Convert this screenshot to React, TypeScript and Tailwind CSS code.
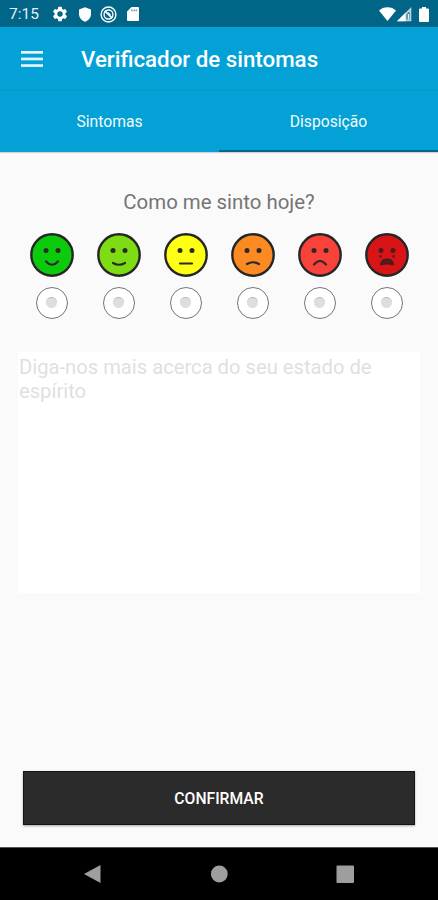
import { useState } from 'react';

interface Mood {
  id: string;
  fill: string;
  mouth: string;
  crying?: boolean;
}

const moods: Mood[] = [
  { id: 'great', fill: '#0ccb0c', mouth: 'M16 28.5 Q22 35 28 28.5' },
  { id: 'good', fill: '#7ddd12', mouth: 'M16 30 Q22 33.5 28 30' },
  { id: 'neutral', fill: '#ffff14', mouth: 'M16 30.5 H28' },
  { id: 'bad', fill: '#fb8a22', mouth: 'M16 31 Q22 27.5 28 31' },
  { id: 'sad', fill: '#f9423a', mouth: 'M16 31.5 Q22 24.5 28 31.5' },
  { id: 'awful', fill: '#d81416', mouth: 'M16 31.3 C17 25 27 25 28 31.3 Q22 29.5 16 31.3 Z', crying: true },
];

function Face({ mood }: { mood: Mood }) {
  const ink = mood.crying ? '#4a1c1c' : '#2b2b2b';

  return (
    <svg viewBox="0 0 44 44" className="w-11 h-11 block">
      <circle cx="22" cy="22" r="20.7" fill={mood.fill} stroke="#262626" strokeWidth="2.4" />
      <circle cx="16" cy="17.5" r="2.5" fill={ink} />
      <circle cx="28" cy="17.5" r="2.5" fill={ink} />
      <path
        d={mood.mouth}
        fill={mood.crying ? '#6b1a1a' : 'none'}
        stroke={ink}
        strokeWidth="2.2"
        strokeLinecap="round"
        strokeLinejoin="round"
      />
      {mood.crying && (
        <g fill="#6b1a1a">
          <circle cx="15.5" cy="23.5" r="1.4" />
          <circle cx="28.5" cy="23.5" r="1.4" />
        </g>
      )}
    </svg>
  );
}

function StatusBar() {
  return (
    <div className="h-[27px] bg-[#006587] flex items-center justify-between px-[9px] text-white">
      <div className="flex items-center">
        <span className="w-[42px] text-[15.5px] leading-none pt-[3px] text-[#e3f1f6]">7:15</span>
        <svg viewBox="0 0 24 24" className="w-[18px] h-[18px]" fill="currentColor">
          <path d="M19.14 12.94c.04-.3.06-.61.06-.94s-.02-.64-.07-.94l2.03-1.58a.49.49 0 0 0 .12-.61l-1.92-3.32a.49.49 0 0 0-.59-.22l-2.39.96a7 7 0 0 0-1.62-.94l-.36-2.54a.48.48 0 0 0-.48-.41h-3.84a.47.47 0 0 0-.47.41l-.36 2.54c-.59.24-1.13.57-1.62.94l-2.39-.96a.48.48 0 0 0-.59.22L2.74 8.87a.48.48 0 0 0 .12.61l2.03 1.58a6 6 0 0 0 0 1.88l-2.03 1.58a.49.49 0 0 0-.12.61l1.92 3.32c.12.22.37.29.59.22l2.39-.96c.5.38 1.03.7 1.62.94l.36 2.54c.05.24.24.41.48.41h3.84c.24 0 .44-.17.47-.41l.36-2.54a7 7 0 0 0 1.62-.94l2.39.96c.22.08.47 0 .59-.22l1.92-3.32a.47.47 0 0 0-.12-.61zM12 15.6A3.6 3.6 0 1 1 12 8.4a3.6 3.6 0 0 1 0 7.2z" />
        </svg>
        <svg viewBox="0 0 14 15" className="w-[14px] h-[15px] ml-[8.5px] mt-px" fill="currentColor">
          <path d="M7 .2 13 2.6V7c0 3.5-2.5 6.5-6 7.7C3.5 13.5 1 10.5 1 7V2.6z" />
        </svg>
        <svg viewBox="0 0 16 16" className="w-[17px] h-[17px] ml-[8.5px] mt-px" fill="none" stroke="currentColor">
          <circle cx="8" cy="8" r="7" strokeWidth="1.3" />
          <circle cx="8" cy="8" r="4.2" strokeWidth="1.3" />
          <path d="M4.6 4.6l6.8 6.8" strokeWidth="1.6" />
          <path d="M7.6 6.2l2.2 2.2" strokeWidth="1.2" />
        </svg>
        <svg viewBox="0 0 12 14" className="w-[12px] h-[14px] ml-[10px] mt-px" fill="currentColor">
          <path
            fillRule="evenodd"
            d="M4.5 0H11a1 1 0 0 1 1 1v12a1 1 0 0 1-1 1H1a1 1 0 0 1-1-1V4.5zM4.5 2.5v1.8h.9V2.5zM6.6 2.5v1.8h.9V2.5zM8.7 2.5v1.8h.9V2.5z"
          />
        </svg>
      </div>
      <div className="flex items-center">
        <svg viewBox="0 0 17 14" className="w-[17px] h-[14px]" fill="currentColor">
          <path d="M8.5 14 0 3.600C2.200 1.400 5.200.200 8.500.200s6.300 1.200 8.500 3.400z" />
        </svg>
        <svg viewBox="0 0 15 15" className="w-[15px] h-[15px] ml-px mt-px">
          <path d="M14.3 0v14.3H0z" fill="#b9d5df" />
          <path d="M8.5 5.8v8.500H0z" fill="#fff" />
          <path d="M12.500 4.500v8h-3V7.500z" fill="#1a6f8d" />
          <path d="M11.300 7v5.500" stroke="#fff" strokeWidth="1.200" />
        </svg>
        <svg viewBox="0 0 10 15" className="w-[10px] h-[15px] ml-[7px] mt-px" fill="currentColor">
          <path d="M3 0h4v1.5h2a1 1 0 0 1 1 1V14a1 1 0 0 1-1 1H1a1 1 0 0 1-1-1V2.5a1 1 0 0 1 1-1h2z" />
        </svg>
      </div>
    </div>
  );
}

function AppBar() {
  return (
    <header className="h-16 bg-[#03a1d6] border-b border-[#0399cb] flex items-center pl-[21px]">
      <button aria-label="Menu">
        <svg viewBox="0 0 22 16" className="w-[22px] h-4 block" fill="#dff4fb">
          <rect y="0" width="22" height="2.7" />
          <rect y="6.6" width="22" height="2.7" />
          <rect y="13.2" width="22" height="2.7" />
        </svg>
      </button>
      <h1 className="ml-[38px] pt-[3px] text-[22.3px] font-medium text-white whitespace-nowrap">Verificador de sintomas</h1>
    </header>
  );
}

function NavBar() {
  return (
    <nav className="h-[53px] bg-black border-t border-[#555]">
      <svg viewBox="0 0 438 52" className="w-full h-[52px]" fill="#9e9e9e">
        <path d="M84 26 100.5 17v18z" />
        <circle cx="219.3" cy="26" r="8.4" />
        <rect x="336.5" y="17.5" width="17.5" height="17.5" rx="1" />
      </svg>
    </nav>
  );
}

export default function App() {
  const [tab, setTab] = useState('Disposição');
  const [selected, setSelected] = useState('');

  return (
    <div className="w-[438px] h-[900px] flex flex-col bg-[#fafafa] overflow-hidden font-[Roboto,sans-serif]">
      <StatusBar />
      <AppBar />

      <div className="h-[61px] shrink-0 bg-[#03a1d6] grid grid-cols-2 shadow-[0_1px_1px_rgba(0,0,0,0.15)]">
        {['Sintomas', 'Disposição'].map((name) => (
          <button
            key={name}
            onClick={() => setTab(name)}
            className={`pt-[2px] text-[15.7px] text-[#f2fafd] border-b-2 ${tab === name ? 'border-[#05658a]' : 'border-transparent'}`}
          >
            {name}
          </button>
        ))}
      </div>

      <main className="flex-1 flex flex-col">
        <h2 className="mt-[36px] text-center text-[20.4px] leading-7 text-[#757575]">Como me sinto hoje?</h2>

        <div className="mt-[17px] pl-[18.5px] pr-[18px] grid grid-cols-6">
          {moods.map((mood) => (
            <div key={mood.id} className="flex flex-col items-center gap-[9.5px]">
              <Face mood={mood} />
              <button
                onClick={() => setSelected(mood.id)}
                aria-label={mood.id}
                className="w-8 h-8 rounded-full border-[1.5px] border-[#757575] bg-white flex items-center justify-center"
              >
                <span
                  className={`w-[11px] h-[11px] rounded-full border-t border-[#b4b4b4] ${selected === mood.id ? 'bg-[#03a1d6]' : 'bg-[#dedede]'}`}
                ></span>
              </button>
            </div>
          ))}
        </div>

        <textarea
          className="mt-[33px] mx-[18px] h-[241px] bg-white resize-none outline-none pt-[3px] pl-px text-[20.2px] leading-6 text-[#757575] placeholder:text-[#dfdfdf] placeholder:opacity-100"
          placeholder="Diga-nos mais acerca do seu estado de espírito"
        />

        <button className="mt-auto mb-[22px] mx-[23px] h-[54px] pt-[2px] bg-[#2b2b2b] border border-[#141414] text-white text-[15.7px] font-medium shadow-[0_1px_2px_rgba(0,0,0,0.35)]">
          CONFIRMAR
        </button>
      </main>

      <NavBar />
    </div>
  );
}
